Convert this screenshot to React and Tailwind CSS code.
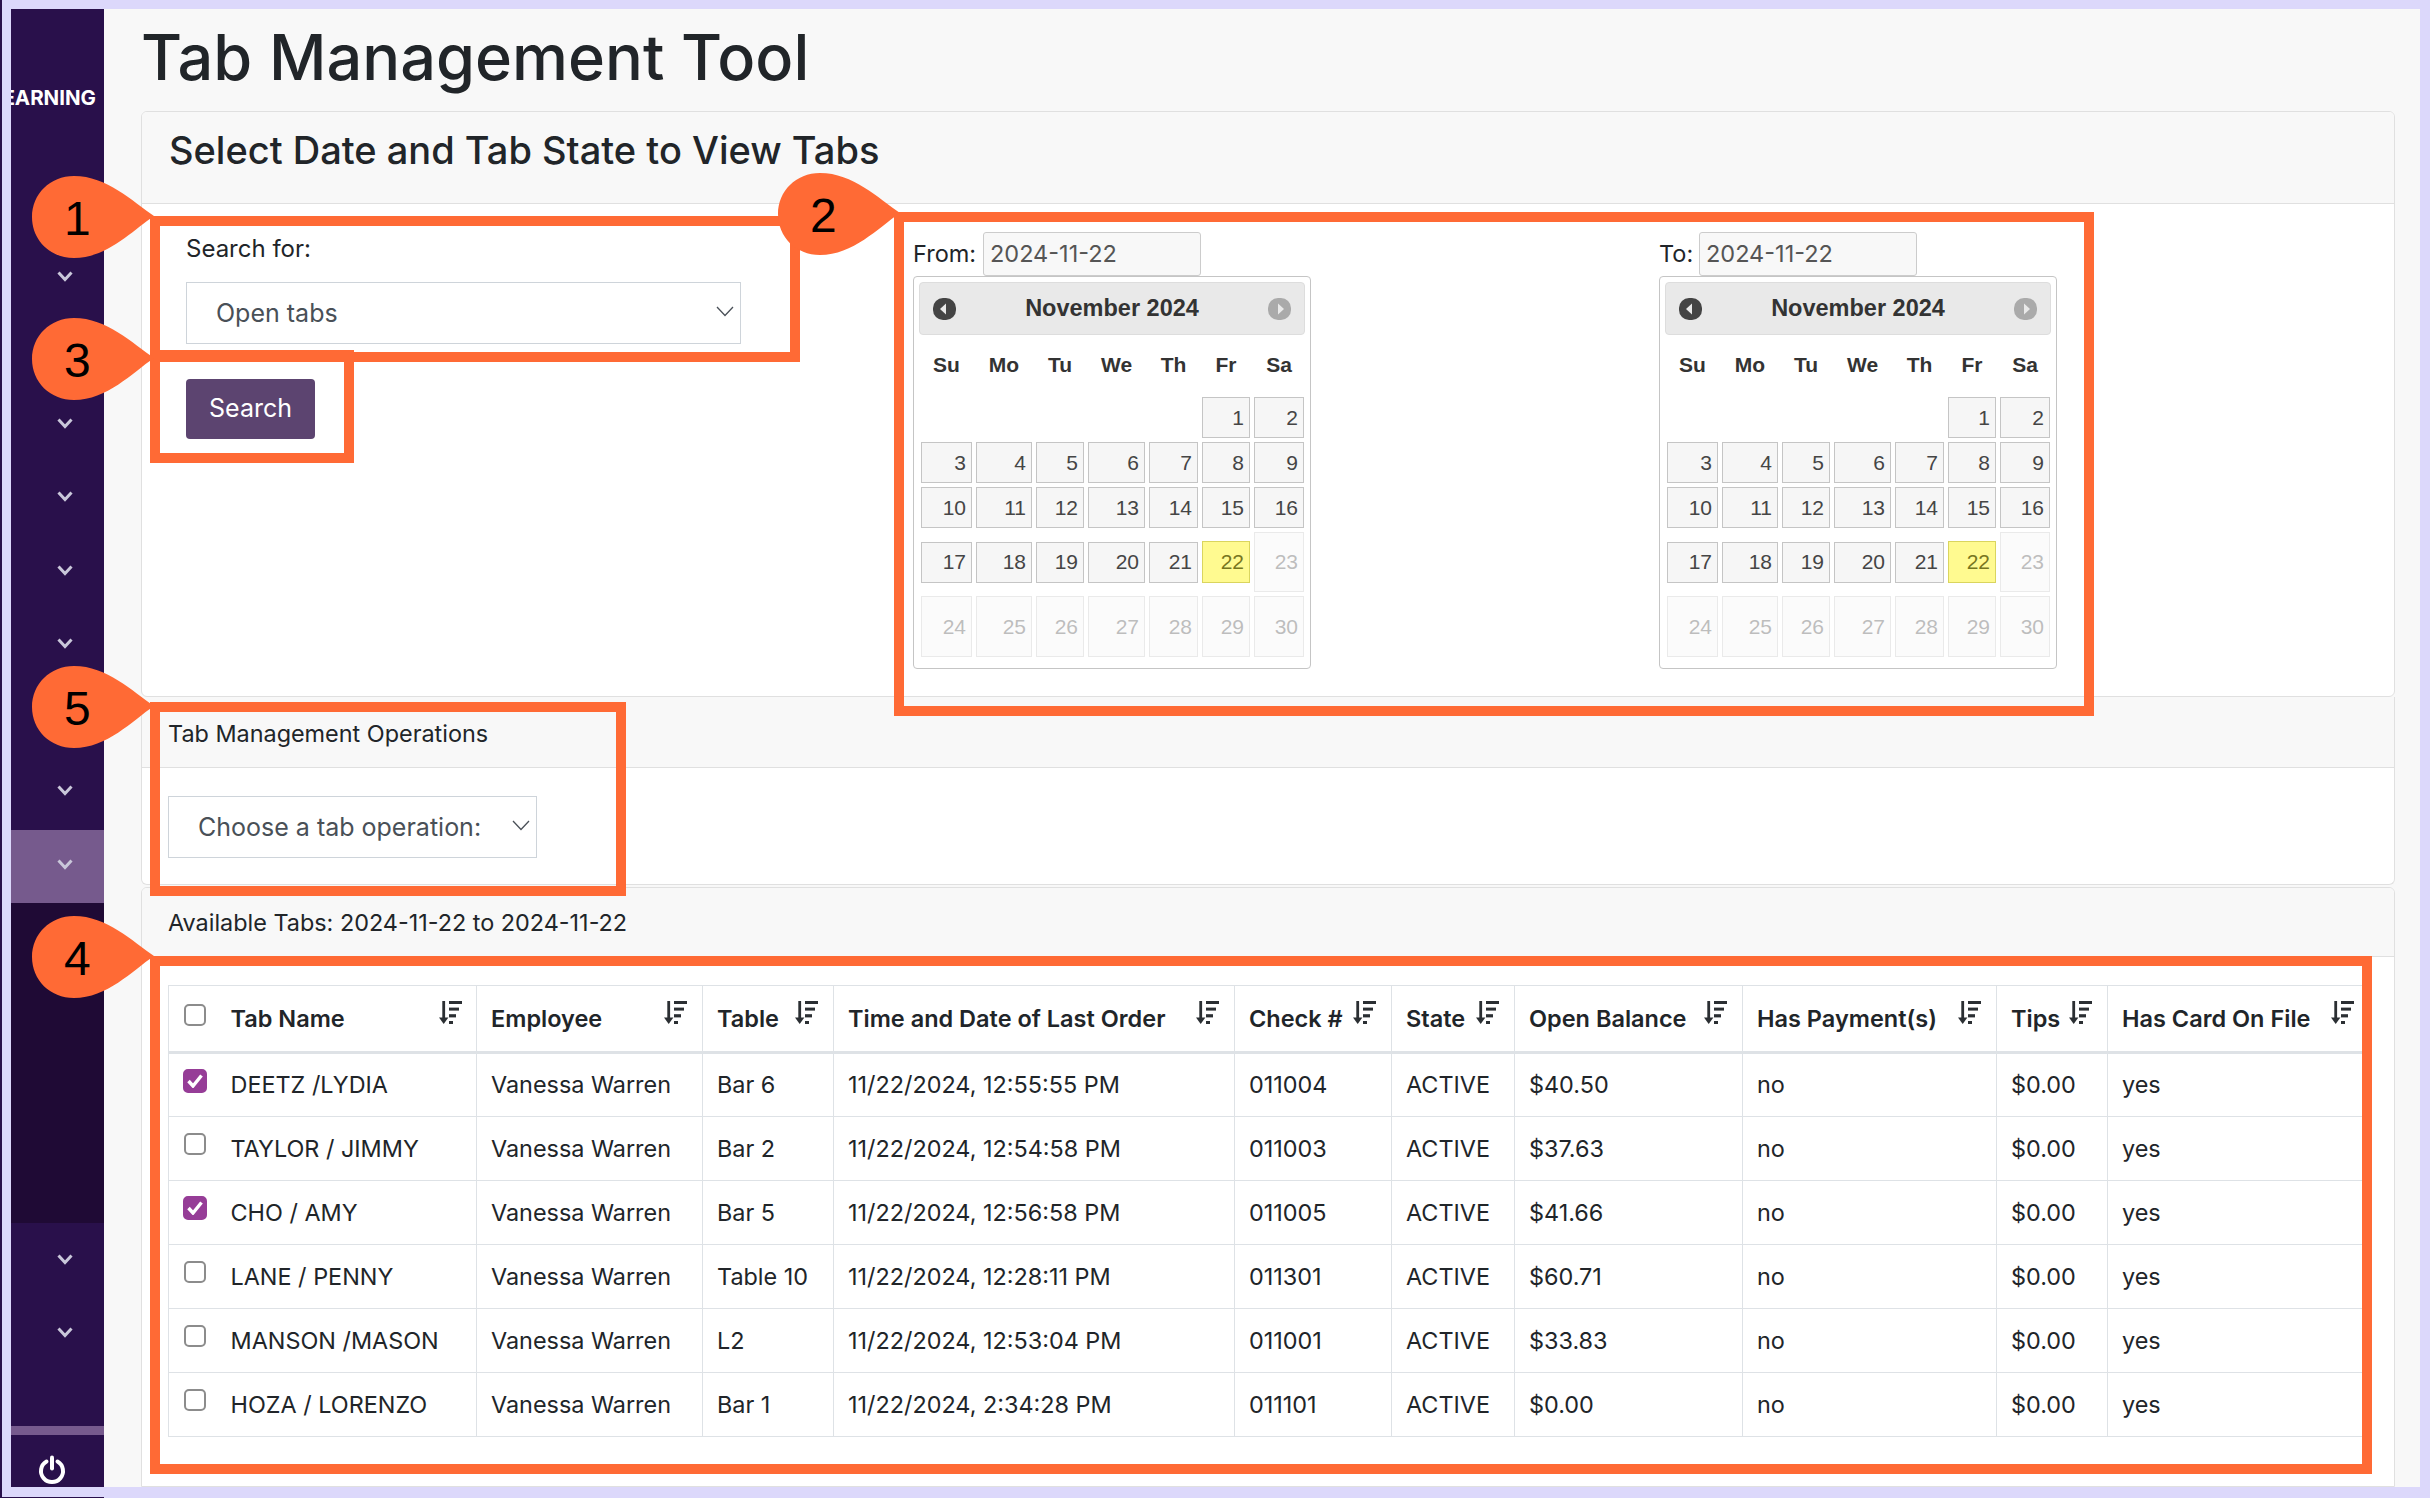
import React from "react";

const calendarCols = "grid grid-cols-[51px_56px_48px_57px_49px_48px_50px] gap-x-[4px]";
const weekdays = ["Su", "Mo", "Tu", "We", "Th", "Fr", "Sa"];

const columns = [
  { title: "Employee", key: "employee" },
  { title: "Table", key: "table" },
  { title: "Time and Date of Last Order", key: "time" },
  { title: "Check #", key: "check" },
  { title: "State", key: "state" },
  { title: "Open Balance", key: "balance" },
  { title: "Has Payment(s)", key: "payment" },
  { title: "Tips", key: "tips" },
  { title: "Has Card On File", key: "card" },
];

const tabs = [
  { name: "DEETZ /LYDIA", checked: true, table: "Bar 6", time: "11/22/2024, 12:55:55 PM", check: "011004", balance: "$40.50" },
  { name: "TAYLOR / JIMMY", checked: false, table: "Bar 2", time: "11/22/2024, 12:54:58 PM", check: "011003", balance: "$37.63" },
  { name: "CHO / AMY", checked: true, table: "Bar 5", time: "11/22/2024, 12:56:58 PM", check: "011005", balance: "$41.66" },
  { name: "LANE / PENNY", checked: false, table: "Table 10", time: "11/22/2024, 12:28:11 PM", check: "011301", balance: "$60.71" },
  { name: "MANSON /MASON", checked: false, table: "L2", time: "11/22/2024, 12:53:04 PM", check: "011001", balance: "$33.83" },
  { name: "HOZA / LORENZO", checked: false, table: "Bar 1", time: "11/22/2024, 2:34:28 PM", check: "011101", balance: "$0.00" },
];

const Chevron = () => (
  <svg width="16" height="11" viewBox="0 0 16 11" fill="none" stroke="#c9c7da" strokeWidth="3">
    <polyline points="1.5,1.5 8,8.5 14.5,1.5" />
  </svg>
);

const SideItem = ({ active }) => (
  <div className={`h-[73.5px] flex items-center justify-center pb-[4px] pl-[14px] ${active ? "bg-[#765a8d]" : ""}`}>
    <Chevron />
  </div>
);

const Sidebar = () => (
  <div className="w-[93px] shrink-0 bg-[#29104b] flex flex-col overflow-hidden">
    <div className="h-[232.5px] pt-[76px] flex justify-end overflow-hidden pr-[8px]">
      <span className="shrink-0 text-white font-bold text-[20.5px] leading-[26px] font-[Inter,sans-serif]">LEARNING</span>
    </div>
    {[0, 1, 2, 3, 4, 5, 6, 7].map((i) => (
      <SideItem key={i} />
    ))}
    <SideItem active />
    <div className="h-[320px] bg-[#1f0a35]" />
    <div className="h-[73px] flex items-center justify-center pl-[14px]">
      <Chevron />
    </div>
    <div className="h-[73px] flex items-center justify-center pl-[14px]">
      <Chevron />
    </div>
    <div className="h-[57px]" />
    <div className="h-[9px] bg-[#765a8d]" />
    <div className="flex-1 flex items-end pb-[2px] pl-[27px]">
      <svg width="28" height="30" viewBox="0 0 28 30" fill="none" stroke="white" strokeWidth="4" strokeLinecap="round">
        <path d="M14 2.5v11" />
        <path d="M8.5 6.5A11 11 0 1 0 19.5 6.5" />
      </svg>
    </div>
  </div>
);

const Arrow = ({ dir, color }) => (
  <svg width="23" height="22" viewBox="0 0 23 22">
    <rect width="23" height="22" rx="10" fill={color} />
    <path d={dir === "left" ? "M13 5.5v11l-6-5.5z" : "M10 5.5v11l6-5.5z"} fill="#e9e9e9" />
  </svg>
);

const DayCell = ({ day, state }) => {
  if (state === "disabled") {
    return (
      <div className="flex items-center justify-end pr-[5px] border border-[#c5c5c5] bg-[#f6f6f6] text-[#454545] opacity-35">
        {day}
      </div>
    );
  }
  if (state === "today") {
    return (
      <div className="h-[42px] self-center flex items-center justify-end pr-[5px] border border-[#dad55e] bg-[#fffa90] text-[#777620]">
        {day}
      </div>
    );
  }
  return (
    <div className="flex items-center justify-end self-center h-[41px] pr-[5px] border border-[#c5c5c5] bg-[#f6f6f6] text-[#454545]">
      {day}
    </div>
  );
};

const DatePicker = ({ label, labelWidth }) => (
  <div className="pt-[1px]">
    <div className="flex items-center h-[44px]">
      <span className={`${labelWidth} text-[23.5px] text-[#212529]`}>{label}</span>
      <div className="w-[218px] h-[44px] pl-[6px] flex items-center border border-[#ccc] rounded-[3px] bg-[#f8f8f8] text-[23.5px] text-[#555]">
        2024-11-22
      </div>
    </div>
    <div className="w-[398px] h-[393px] bg-white border border-[#c5c5c5] rounded-[4px] p-[5px] font-['Liberation_Sans',Arial,sans-serif]">
      <div className="h-[53px] px-[13px] flex items-center justify-between border border-[#ddd] rounded-[4px] bg-[#e9e9e9]">
        <Arrow dir="left" color="#444" />
        <span className="text-[23.5px] font-bold text-[#333]">November 2024</span>
        <Arrow dir="right" color="#aaa" />
      </div>
      <div className={`${calendarCols} mt-[14px] ml-[2px] h-[30px] items-center text-center font-bold text-[21px] text-[#333]`}>
        {weekdays.map((d) => (
          <span key={d}>{d}</span>
        ))}
      </div>
      <div className={`${calendarCols} mt-[18px] ml-[2px] gap-y-[4px] grid-rows-[41px_41px_41px_60px_61px] text-[21px]`}>
        <div className="col-start-6">
          <DayCell day={1} />
        </div>
        <DayCell day={2} />
        {Array.from({ length: 19 }, (_, i) => i + 3).map((d) => (
          <DayCell key={d} day={d} />
        ))}
        <DayCell day={22} state="today" />
        {[23, 24, 25, 26, 27, 28, 29, 30].map((d) => (
          <DayCell key={d} day={d} state="disabled" />
        ))}
      </div>
    </div>
  </div>
);

const SelectBox = ({ width, text }) => (
  <div className={`relative ${width} h-[62px]`}>
    <select className="w-full h-full appearance-none pl-[29px] pt-[1px] bg-white border border-[#ced4da] text-[25px] text-[#495057]">
      <option>{text}</option>
    </select>
    <svg className="absolute right-[7px] top-[24px]" width="18" height="11" viewBox="0 0 18 11" fill="none" stroke="#4a5058" strokeWidth="1.3">
      <polyline points="1,1 9,9.5 17,1" />
    </svg>
  </div>
);

const SortIcon = ({ className }) => (
  <svg className={`shrink-0 text-[#2b2f33] ${className}`} width="23" height="23" viewBox="0 0 23 23" fill="currentColor">
    <rect x="3.3" y="0" width="2.8" height="19" />
    <path d="M0 16.5h9.4L4.7 23z" />
    <rect x="10" y="0" width="13" height="3" />
    <rect x="10" y="6.6" width="10" height="3" />
    <rect x="10" y="13.2" width="7" height="3.2" />
    <rect x="10" y="20" width="4" height="3" />
  </svg>
);

const Check = ({ checked }) => (
  <span className={`relative -mt-[8px] shrink-0 ${checked ? "w-[24px] h-[24px] ml-[14px] mr-[23.5px]" : "w-[22px] h-[22px] ml-[15px] mr-[24.5px]"}`}>
    <input
      type="checkbox"
      defaultChecked={checked}
      className="block w-full h-full appearance-none bg-white border-2 border-[#8c8c8c] rounded-[5px] checked:bg-[#963d97] checked:border-[#963d97]"
    />
    {checked && (
      <svg className="absolute left-[4px] top-[5px]" width="16" height="14" viewBox="0 0 16 14" fill="none" stroke="white" strokeWidth="3.4">
        <polyline points="1.5,7 6,12 14.5,1.5" />
      </svg>
    )}
  </span>
);

const TabTable = () => (
  <table className="w-[2201px] table-fixed border-collapse text-[23.4px] text-[#212529]">
    <colgroup>
      <col className="w-[308px]" />
      <col className="w-[226px]" />
      <col className="w-[131px]" />
      <col className="w-[401px]" />
      <col className="w-[157px]" />
      <col className="w-[123px]" />
      <col className="w-[228px]" />
      <col className="w-[254px]" />
      <col className="w-[111px]" />
      <col className="w-[262px]" />
    </colgroup>
    <thead>
      <tr className="h-[67px] border-t border-b-[3px] border-[#dee2e6] text-[23.5px]">
        <th className="p-0 border-x border-[#dee2e6] font-semibold text-left">
          <div className="flex items-center pr-[14px]">
            <Check />
            <span>Tab Name</span>
            <SortIcon className="ml-auto -mt-[12px]" />
          </div>
        </th>
        {columns.map((col) => (
          <th key={col.key} className="p-0 border-x border-[#dee2e6] font-semibold text-left">
            <div className="flex items-center justify-between pl-[14px] pr-[15px] whitespace-nowrap">
              <span>{col.title}</span>
              <SortIcon className="-mt-[12px]" />
            </div>
          </th>
        ))}
      </tr>
    </thead>
    <tbody>
      {tabs.map((tab) => (
        <tr key={tab.name} className="h-[64px] border-b border-[#dee2e6]">
          <td className="p-0 border-x border-[#dee2e6]">
            <div className="flex items-center">
              <Check checked={tab.checked} />
              <span>{tab.name}</span>
            </div>
          </td>
          <td className="px-[14px] border-x border-[#dee2e6]">Vanessa Warren</td>
          <td className="px-[14px] border-x border-[#dee2e6]">{tab.table}</td>
          <td className="px-[14px] border-x border-[#dee2e6]">{tab.time}</td>
          <td className="px-[14px] border-x border-[#dee2e6]">{tab.check}</td>
          <td className="px-[14px] border-x border-[#dee2e6]">ACTIVE</td>
          <td className="px-[14px] border-x border-[#dee2e6]">{tab.balance}</td>
          <td className="px-[14px] border-x border-[#dee2e6]">no</td>
          <td className="px-[14px] border-x border-[#dee2e6]">$0.00</td>
          <td className="px-[14px] border-x border-[#dee2e6]">yes</td>
        </tr>
      ))}
    </tbody>
  </table>
);

// orange callouts drawn over the screenshot
const Callout = ({ num, className }) => (
  <div className={`absolute w-[122px] h-[82px] ${className}`}>
    <svg width="122" height="82" viewBox="0 0 122 82" fill="#ff6a35">
      <path d="M122 40C100 25 75 0 42 0C18 0 0 18 0 41C0 64 18 82 42 82C75 82 100 55 122 40Z" />
    </svg>
    <span className="absolute left-[32px] top-[16px] text-[48px] leading-[54px] text-black font-['Liberation_Sans',Arial,sans-serif]">
      {num}
    </span>
  </div>
);

const App = () => {
  return (
    <div className="relative w-[2430px] h-[1498px] overflow-hidden bg-[#dcd8fb] pl-[11px] pt-[9px] font-[Inter,sans-serif]">
      <div className="absolute left-0 top-0 w-[1.5px] h-[1498px] bg-[#29104b]" />
      <div className="absolute left-0 bottom-0 w-[104px] h-[1px] bg-[#29104b]" />

      <div className="flex w-[2409px] h-[1478px]">
        <Sidebar />
        <div className="flex-1 bg-[#f8f8f8] pl-[37px] pr-[25px] overflow-hidden">
          <h1 className="h-[102px] text-[63px] leading-[96px] font-medium text-[#212529]">Tab Management Tool</h1>

          <div className="h-[586px] border border-[#e0e0e0] rounded-[6px] bg-white overflow-hidden">
            <div className="h-[92px] pl-[27px] pb-[14px] flex items-center bg-[#f8f8f8] border-b border-[#e0e0e0] text-[38px] font-medium text-[#212529]">
              Select Date and Tab State to View Tabs
            </div>
            <div className="flex pl-[44px] pt-[27px]">
              <div className="w-[727px]">
                <div className="text-[24px] leading-[36px] text-[#212529]">Search for:</div>
                <div className="mt-[15px]">
                  <SelectBox width="w-[555px]" text="Open tabs" />
                </div>
                <button className="mt-[35px] w-[129px] h-[60px] rounded-[4px] bg-[#5c4470] text-white text-[25px]">Search</button>
              </div>
              <div className="w-[746px]">
                <DatePicker label="From:" labelWidth="w-[70px]" />
              </div>
              <DatePicker label="To:" labelWidth="w-[40px]" />
            </div>
          </div>

          <div className="h-[188px] border-x border-b border-[#e0e0e0] rounded-b-[6px] bg-white overflow-hidden">
            <div className="h-[71px] pl-[26px] pt-[3px] flex items-center bg-[#f8f8f8] border-b border-[#e0e0e0] text-[23.4px] text-[#212529]">
              Tab Management Operations
            </div>
            <div className="pl-[26px] pt-[28px]">
              <SelectBox width="w-[369px]" text="Choose a tab operation:" />
            </div>
          </div>

          <div className="mt-[2px] h-[600px] border border-[#e0e0e0] rounded-t-[6px] bg-white overflow-hidden">
            <div className="h-[69px] pl-[26px] pt-[2px] flex items-center bg-[#f8f8f8] border-b border-[#e0e0e0] text-[23.4px] text-[#212529]">
              Available Tabs: 2024-11-22 to 2024-11-22
            </div>
            <div className="pl-[26px] pt-[28px]">
              <TabTable />
            </div>
          </div>
        </div>
      </div>

      {/* annotation boxes */}
      <div className="absolute left-[150px] top-[216px] w-[650px] h-[146px] border-[10px] border-[#ff6a35]" />
      <div className="absolute left-[150px] top-[350px] w-[204px] h-[113px] border-[10px] border-[#ff6a35]" />
      <div className="absolute left-[894px] top-[212px] w-[1200px] h-[504px] border-[10px] border-[#ff6a35]" />
      <div className="absolute left-[150px] top-[702px] w-[476px] h-[194px] border-[10px] border-[#ff6a35]" />
      <div className="absolute left-[150px] top-[956px] w-[2222px] h-[518px] border-[10px] border-[#ff6a35]" />

      <Callout num="1" className="left-[32px] top-[176px]" />
      <Callout num="3" className="left-[32px] top-[318px]" />
      <Callout num="2" className="left-[778px] top-[173px]" />
      <Callout num="5" className="left-[32px] top-[666px]" />
      <Callout num="4" className="left-[32px] top-[916px]" />
    </div>
  );
};

export default App;
